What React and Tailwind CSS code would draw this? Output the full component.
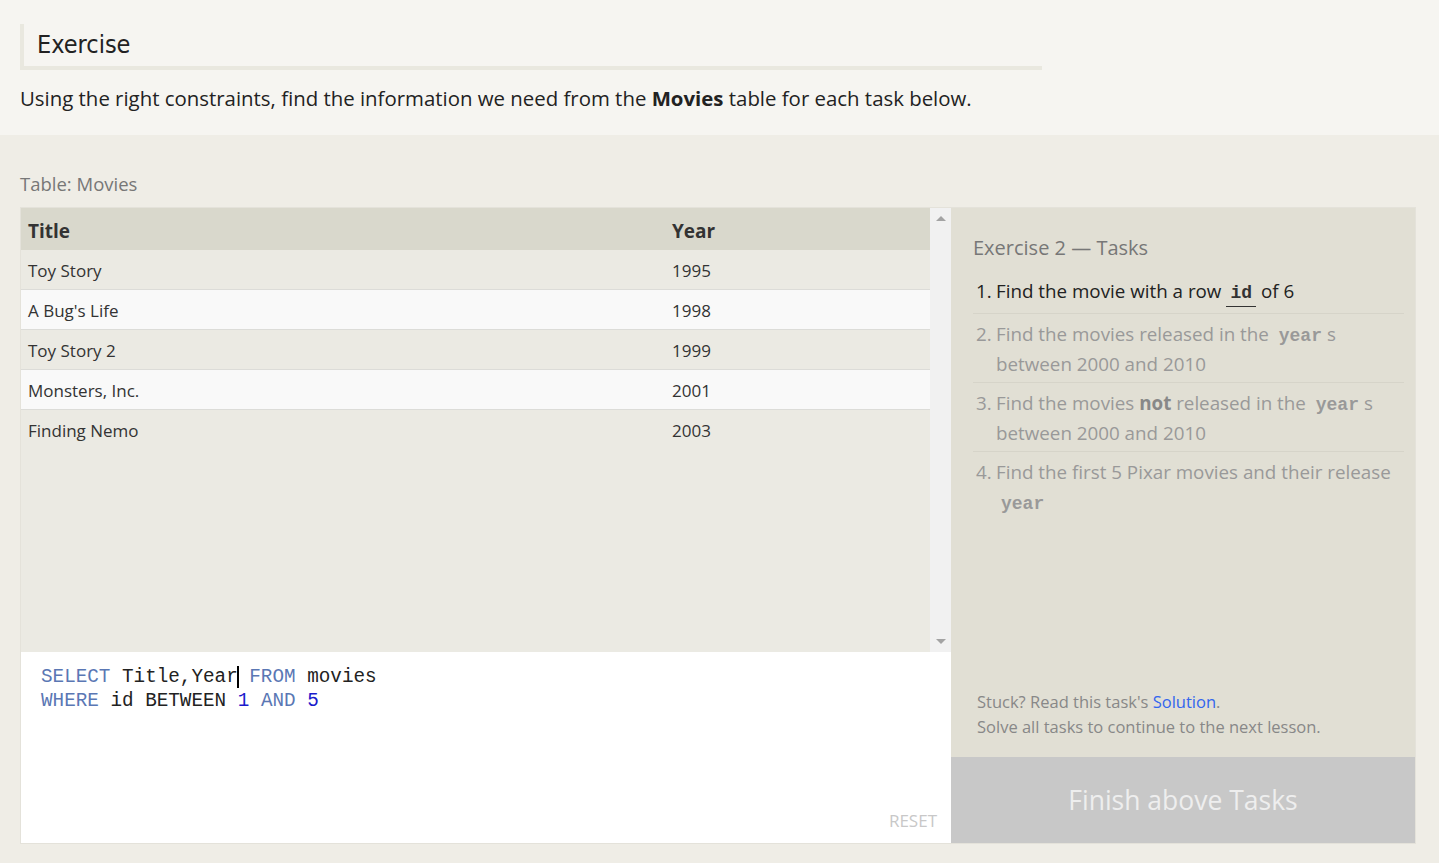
import React from 'react'

const movies = [
  { title: 'Toy Story', year: 1995 },
  { title: "A Bug's Life", year: 1998 },
  { title: 'Toy Story 2', year: 1999 },
  { title: 'Monsters, Inc.', year: 2001 },
  { title: 'Finding Nemo', year: 2003 },
]

const sans = { fontFamily: '"Open Sans", "Noto Sans", sans-serif' }

function Code({ children, dim }) {
  return (
    <code
      className={`mx-[5px] font-bold text-[18px] leading-none ${dim ? 'text-[#999]' : 'text-[#333] border-b border-[#333] px-1 inline-block pb-[4px]'}`}
      style={{ fontFamily: '"Liberation Mono", monospace' }}
    >
      {children}
    </code>
  )
}

export default function App() {
  return (
    <div className="min-h-[863px] bg-[#efede6] text-[#222]" style={sans}>
      <div className="bg-[#f6f5f1] px-5 pt-6 pb-[21px]">
        <div className="w-[1022px] border-l-4 border-b-4 border-[#e9e8df] pl-[13px] h-[46px] flex items-center">
          <h1 className="text-[25px] text-[#222]" style={{ fontFamily: '"DejaVu Sans Condensed", "Liberation Sans Narrow", sans-serif', fontStretch: 'condensed' }}>Exercise</h1>
        </div>
        <p className="mt-[13px] text-[20.4px]">
          Using the right constraints, find the information we need from the <b>Movies</b> table for each task below.
        </p>
      </div>

      <div className="px-5 pt-[35px]">
        <div className="text-[18.5px] text-[#777] mb-[10px]">Table: Movies</div>
        <div className="flex w-[1396px] h-[637px] border border-[#e4e2da]">
          <div className="w-[930px] flex flex-col">
            <div className="flex h-[444px]">
              <div className="flex-1 bg-[#ebeae3]">
                <div className="flex h-[42px] items-center pt-[3px] bg-[#d9d8cc] text-[19px] font-bold text-[#333]">
                  <div className="w-[644px] pl-[7px]">Title</div>
                  <div className="pl-[7px]">Year</div>
                </div>
                {movies.map((m, i) => (
                  <div
                    key={m.title}
                    className={`flex h-[40px] items-center pt-[1px] text-[17px] text-[#333] border-b border-[#dcdcd8] ${i % 2 ? 'bg-[#f9f9f9]' : 'bg-[#ebeae3]'} ${i === movies.length - 1 ? 'border-b-0' : ''}`}
                  >
                    <div className="w-[644px] pl-[7px]">{m.title}</div>
                    <div className="pl-[7px]">{m.year}</div>
                  </div>
                ))}
              </div>
              <div className="w-[21px] bg-[#f1f1f1] flex flex-col items-center justify-between py-[8px]">
                <div className="w-0 h-0 border-l-[5px] border-r-[5px] border-b-[5px] border-l-transparent border-r-transparent border-b-[#a3a3a3]" />
                <div className="w-0 h-0 border-l-[5px] border-r-[5px] border-t-[5px] border-l-transparent border-r-transparent border-t-[#a3a3a3]" />
              </div>
            </div>
            <div className="flex-1 bg-white relative pt-[13px] pl-[20px] text-[19.3px] leading-[24px]" style={{ fontFamily: '"Liberation Mono", monospace' }}>
              <div>
                <span className="text-[#5a77b4]">SELECT</span> Title,Year<span className="inline-block w-[2px] h-[22px] bg-black align-middle -ml-[1px] mr-[-1px]"></span> <span className="text-[#5a77b4]">FROM</span> movies
              </div>
              <div>
                <span className="text-[#5a77b4]">WHERE</span> id BETWEEN <span className="text-[#1a1acc]">1</span> <span className="text-[#5a77b4]">AND</span> <span className="text-[#1a1acc]">5</span>
              </div>
              <div className="absolute right-[14px] bottom-[10px] text-[17px] text-[#c8c8c8]" style={sans}>RESET</div>
            </div>
          </div>

          <div className="flex-1 bg-[#e1dfd4] flex flex-col">
            <div className="flex-1 pl-[22px] pr-[11px] pt-[25px] flex flex-col">
              <div className="text-[20px] text-[#777]">Exercise 2 — Tasks</div>
              <ol className="mt-[13px] text-[18.8px] leading-[30px]">
                <li className="flex border-b border-[#d6d4c9] pb-[6px]">
                  <span className="w-[23px] pl-[3px] shrink-0 text-[#222]">1.</span>
                  <span className="text-[#222]">Find the movie with a row<Code>id</Code>of 6</span>
                </li>
                <li className="flex border-b border-[#d6d4c9] pt-[5px] pb-[3px] text-[#999]">
                  <span className="w-[23px] pl-[3px] shrink-0">2.</span>
                  <span>Find the movies released in the <Code dim>year</Code>s between 2000 and 2010</span>
                </li>
                <li className="flex border-b border-[#d6d4c9] pt-[5px] pb-[3px] text-[#999]">
                  <span className="w-[23px] pl-[3px] shrink-0">3.</span>
                  <span>Find the movies <b className="text-[#888]">not</b> released in the <Code dim>year</Code>s between 2000 and 2010</span>
                </li>
                <li className="flex pt-[5px] text-[#999]">
                  <span className="w-[23px] pl-[3px] shrink-0">4.</span>
                  <span>Find the first 5 Pixar movies and their release <Code dim>year</Code></span>
                </li>
              </ol>
              <div className="mt-auto mb-[18px] pl-[4px] text-[16.5px] leading-[25px] text-[#888]">
                <div>Stuck? Read this task's <span className="text-[#3366ee]">Solution</span>.</div>
                <div>Solve all tasks to continue to the next lesson.</div>
              </div>
            </div>
            <div className="h-[86px] bg-[#c8c8c8] flex items-center justify-center pt-[2px] text-[26.5px] text-[#eeeeee]">
              Finish above Tasks
            </div>
          </div>
        </div>
      </div>
    </div>
  )
}
